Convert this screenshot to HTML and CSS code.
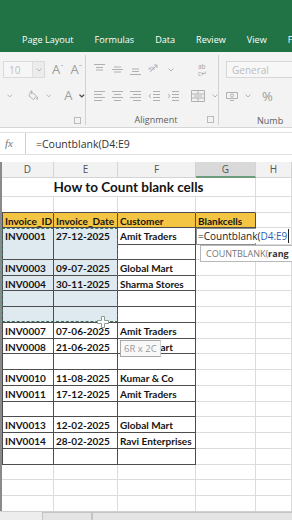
FILE: index.html
```html
<!DOCTYPE html>
<html>
<head>
	<meta charset="utf-8">
	<title>How to Count blank cells</title>
	<link rel="stylesheet" href="styles.css">
</head>
<body>
	<div class="tabbar">
		<span>Page Layout</span>
		<span>Formulas</span>
		<span>Data</span>
		<span>Review</span>
		<span>View</span>
		<span>F</span>
	</div>

	<div class="ribbon">
		<!-- font group (cut off on the left) -->
		<div class="grp grp-font">
			<div class="rrow">
				<div class="sizebox"><span>10</span><span class="sizedd"><svg class="chev" viewBox="0 0 6 4"><path d="M0.5 0.5 L3 3 L5.5 0.5"/></svg></span></div>
				<span class="bigA">A<small>&#710;</small></span>
				<span class="bigA">A<small>&#711;</small></span>
			</div>
			<div class="rrow">
				<svg class="chev first" viewBox="0 0 6 4"><path d="M0.5 0.5 L3 3 L5.5 0.5"/></svg>
				<svg class="ico" width="12" height="13" viewBox="0 0 12 13"><path d="M3 2 L9 7 L6 11 L1 7 Z M4 1 L4 5"/><path d="M10 8 Q11 10 10 11 Q9 10 10 8 Z"/></svg>
				<svg class="chev" viewBox="0 0 6 4"><path d="M0.5 0.5 L3 3 L5.5 0.5"/></svg>
				<span class="bigA plain">A</span>
				<svg class="chev dark" viewBox="0 0 6 4"><path d="M0.5 0.5 L3 3 L5.5 0.5"/></svg>
			</div>
			<div class="rrow foot">
				<span class="launch"></span>
			</div>
		</div>

		<!-- alignment group -->
		<div class="grp grp-align">
			<div class="rrow">
				<svg class="ico" width="11" height="13" viewBox="0 0 11 13"><path d="M0 1.5 H11 M2 4.5 H9 M2 7 H9"/></svg>
				<svg class="ico" width="11" height="13" viewBox="0 0 11 13"><path d="M0 6.5 H11 M2 4 H9 M2 9 H9"/></svg>
				<svg class="ico" width="11" height="13" viewBox="0 0 11 13"><path d="M0 11.5 H11 M2 6 H9 M2 8.5 H9"/></svg>
				<svg class="ico" width="13" height="13" viewBox="0 0 13 13"><path d="M2 9 L9 2 M9 2 L6 2 M9 2 L9 5"/><text x="0" y="7" font-size="6">ab</text></svg>
				<svg class="chev" viewBox="0 0 6 4"><path d="M0.5 0.5 L3 3 L5.5 0.5"/></svg>
				<span class="wrap">ab<br>c&#8629;</span>
			</div>
			<div class="rrow">
				<svg class="ico" width="11" height="12" viewBox="0 0 11 12"><path d="M0 1.5 H11 M0 4.5 H8 M0 7.5 H11 M0 10.5 H8"/></svg>
				<svg class="ico" width="11" height="12" viewBox="0 0 11 12"><path d="M0 1.5 H11 M2 4.5 H9 M0 7.5 H11 M2 10.5 H9"/></svg>
				<svg class="ico" width="11" height="12" viewBox="0 0 11 12"><path d="M0 1.5 H11 M3 4.5 H11 M0 7.5 H11 M3 10.5 H11"/></svg>
				<svg class="ico" width="12" height="12" viewBox="0 0 12 12"><path d="M5 1.5 H12 M5 4.5 H12 M5 7.5 H12 M5 10.5 H12 M3 4 L1 6 L3 8"/></svg>
				<svg class="ico" width="12" height="12" viewBox="0 0 12 12"><path d="M5 1.5 H12 M5 4.5 H12 M5 7.5 H12 M5 10.5 H12 M1 4 L3 6 L1 8"/></svg>
				<svg class="ico merge" width="14" height="12" viewBox="0 0 14 12"><path d="M0.5 0.5 H13.5 V11.5 H0.5 Z M0.5 4 H13.5 M0.5 8 H13.5 M7 0.5 V4 M7 8 V11.5 M3 6 H11"/></svg>
				<svg class="chev" viewBox="0 0 6 4"><path d="M0.5 0.5 L3 3 L5.5 0.5"/></svg>
			</div>
			<div class="rrow foot">
				<span class="grpname">Alignment</span>
				<span class="launch"></span>
			</div>
		</div>

		<!-- number group (cut off on the right) -->
		<div class="grp grp-num">
			<div class="rrow">
				<div class="fmtbox">General</div>
			</div>
			<div class="rrow">
				<svg class="ico" width="12" height="11" viewBox="0 0 12 11"><path d="M0.5 1.5 H11.5 V7.5 H0.5 Z"/><circle cx="6" cy="4.5" r="1.6"/><path d="M4 9.5 H8"/></svg>
				<svg class="chev" viewBox="0 0 6 4"><path d="M0.5 0.5 L3 3 L5.5 0.5"/></svg>
				<span class="pct">%</span>
			</div>
			<div class="rrow foot">
				<span class="grpname">Numb</span>
			</div>
		</div>
	</div>

	<div class="formulabar">
		<span class="fx">fx</span>
		<span class="ftext">=Countblank(D4:E9</span>
	</div>

	<div class="sheet">
		<div class="row colhead">
			<div class="rh"></div><div>D</div><div>E</div><div>F</div><div class="on">G</div><div>H</div>
		</div>
		<div class="row r-title">
			<div class="rh"></div><div class="title">How to Count blank cells</div><div></div>
		</div>
		<div class="row">
			<div class="rh"></div><div class="tb-top"></div><div class="tb-top"></div><div class="tb-top"></div><div class="tb-top"></div><div></div>
		</div>
		<div class="row">
			<div class="rh"></div><div class="b bl hd">Invoice_ID</div><div class="b hd">Invoice_Date</div><div class="b hd">Customer</div><div class="b hd">Blankcells</div><div></div>
		</div>

		<div class="row"><div class="rh"></div><div class="b bl sel">INV0001</div><div class="b sel">27-12-2025</div><div class="b">Amit Traders</div><div class="edit"><span class="etext">=Countblank(<em>D4:E9</em></span></div><div class="white"></div></div>
		<div class="row"><div class="rh"></div><div class="b bl sel"></div><div class="b sel"></div><div class="b"></div><div></div><div></div></div>
		<div class="row"><div class="rh"></div><div class="b bl sel">INV0003</div><div class="b sel">09-07-2025</div><div class="b">Global Mart</div><div></div><div></div></div>
		<div class="row"><div class="rh"></div><div class="b bl sel">INV0004</div><div class="b sel">30-11-2025</div><div class="b">Sharma Stores</div><div></div><div></div></div>
		<div class="row"><div class="rh"></div><div class="b bl sel"></div><div class="b sel"></div><div class="b"></div><div></div><div></div></div>
		<div class="row"><div class="rh"></div><div class="b bl sel"></div><div class="b sel"></div><div class="b"></div><div></div><div></div></div>
		<div class="row"><div class="rh"></div><div class="b bl">INV0007</div><div class="b">07-06-2025</div><div class="b">Amit Traders</div><div></div><div></div></div>
		<div class="row"><div class="rh"></div><div class="b bl">INV0008</div><div class="b">21-06-2025</div><div class="b">Global Mart</div><div></div><div></div></div>
		<div class="row"><div class="rh"></div><div class="b bl"></div><div class="b"></div><div class="b"></div><div></div><div></div></div>
		<div class="row"><div class="rh"></div><div class="b bl">INV0010</div><div class="b">11-08-2025</div><div class="b">Kumar &amp; Co</div><div></div><div></div></div>
		<div class="row"><div class="rh"></div><div class="b bl">INV0011</div><div class="b">17-12-2025</div><div class="b">Amit Traders</div><div></div><div></div></div>
		<div class="row"><div class="rh"></div><div class="b bl"></div><div class="b"></div><div class="b"></div><div></div><div></div></div>
		<div class="row"><div class="rh"></div><div class="b bl">INV0013</div><div class="b">12-02-2025</div><div class="b">Global Mart</div><div></div><div></div></div>
		<div class="row"><div class="rh"></div><div class="b bl">INV0014</div><div class="b">28-02-2025</div><div class="b">Ravi Enterprises</div><div></div><div></div></div>
		<div class="row"><div class="rh"></div><div class="b bl"></div><div class="b"></div><div class="b"></div><div></div><div></div></div>
		<div class="row"><div class="rh"></div><div></div><div></div><div></div><div></div><div></div></div>
		<div class="row"><div class="rh"></div><div></div><div></div><div></div><div></div><div></div></div>
		<div class="row"><div class="rh"></div><div></div><div></div><div></div><div></div><div></div></div>

		<!-- things lying over the grid -->
		<div class="marquee"></div>
		<svg class="plus" width="12" height="12" viewBox="0 0 12 12"><path d="M4.5 0.5 H7.5 V4.5 H11.5 V7.5 H7.5 V11.5 H4.5 V7.5 H0.5 V4.5 H4.5 Z"/></svg>
		<div class="tip-size">6R x 2C</div>
		<div class="tip-fn">COUNTBLANK(<b>rang</b></div>
	</div>

	<div class="sheettabs">
		<span class="stab"></span>
		<span class="stab wide"><i></i></span>
	</div>
</body>
</html>
```

FILE: styles.css
```css
body{
	margin: 0;
	width: 292px;
	height: 520px;
	overflow: hidden;
	background: #fff;
	font-family: "Lato", "Open Sans", sans-serif;
}

/* green tab strip */
.tabbar{
	height: 52px;
	box-sizing: border-box;
	background: #217346;
	color: #fff;
	display: flex;
	align-items: flex-end;
	gap: 21px;
	padding: 0 0 6px 22px;
	font-family: "Open Sans", sans-serif;
	font-size: 9.1px;
	white-space: nowrap;
	overflow: hidden;
}

/* ribbon, greyed out while editing */
.ribbon{
	height: 76px;
	box-sizing: border-box;
	background: #f3f3f3;
	border-bottom: 1px solid #d6d6d6;
	display: flex;
	color: #a9a9a9;
}
.grp{
	display: flex;
	flex-direction: column;
	padding-top: 6px;
	box-sizing: border-box;
	border-right: 1px solid #d2d2d2;
	margin: 3px 0 2px;
	padding-bottom: 0;
}
.grp-font{
	width: 86px;
	padding-left: 3px;
}
.grp-align{
	width: 146px;
	padding-left: 8px;
}
.grp-num{
	flex: 1;
	border-right: none;
	padding-left: 7px;
}
.rrow{
	height: 18px;
	display: flex;
	align-items: center;
	gap: 7px;
	margin-bottom: 9px;
}
.rrow.foot{
	height: 12px;
	margin: 0;
	position: relative;
	justify-content: center;
}
.ico{
	fill: none;
	stroke: #b0b0b0;
	stroke-width: 1;
}
.ico text{
	fill: #b0b0b0;
	stroke: none;
	font-family: "Open Sans", sans-serif;
}
.chev{
	width: 6px;
	height: 4px;
	fill: none;
	stroke: #b3b3b3;
	stroke-width: 1;
}
.chev.first{
	margin-left: 4px;
	margin-right: 8px;
}
.chev.dark{
	stroke: #444;
	stroke-width: 1.4;
}
.sizebox{
	width: 42px;
	height: 17px;
	box-sizing: border-box;
	border: 1px solid #dadada;
	background: #f6f6f6;
	display: flex;
	align-items: center;
	justify-content: space-between;
	font-size: 10px;
	font-family: "Open Sans", sans-serif;
	padding-left: 5px;
	color: #bdbdbd;
}
.sizedd{
	width: 11px;
	height: 15px;
	border-left: 1px solid #dedede;
	display: flex;
	align-items: center;
	justify-content: center;
	background: #ececec;
}
.bigA{
	font-family: "Open Sans", sans-serif;
	font-size: 13px;
	color: #9d9d9d;
	line-height: 1;
}
.bigA small{
	font-size: 8px;
	vertical-align: top;
}
.bigA.plain{
	margin-left: 6px;
}
.wrap{
	font-family: "Open Sans", sans-serif;
	font-size: 6.5px;
	line-height: 7px;
	margin-left: 17px;
	color: #a0a0a0;
}
.merge{
	margin-left: 5px;
}
.fmtbox{
	width: 80px;
	height: 17px;
	box-sizing: border-box;
	border: 1px solid #d8d8d8;
	background: #f7f7f7;
	font-size: 10px;
	font-family: "Open Sans", sans-serif;
	padding: 1px 0 0 5px;
	color: #bcbcbc;
}
.pct{
	font-family: "Open Sans", sans-serif;
	font-size: 13px;
	margin-left: 4px;
	color: #9a9a9a;
}
.grpname{
	font-family: "Open Sans", sans-serif;
	font-size: 9px;
	color: #5e5e5e;
}
.grp-num .rrow.foot{
	justify-content: flex-start;
	padding-left: 31px;
}
.launch{
	position: absolute;
	right: 4px;
	top: 3px;
	width: 5px;
	height: 5px;
	border: 1px solid #bbb;
}

/* formula bar */
.formulabar{
	margin-top: 4px;
	height: 21px;
	background: #fff;
	border-top: 1px solid #e0e0e0;
	border-bottom: 1px solid #e0e0e0;
	display: flex;
	align-items: center;
	font-size: 10.5px;
	color: #333;
}
.fx{
	width: 26px;
	height: 21px;
	line-height: 20px;
	border-right: 1px solid #cfcfcf;
	padding-left: 5px;
	box-sizing: border-box;
	font-family: "Liberation Serif", serif;
	font-style: italic;
	color: #777;
	font-size: 11px;
}
.ftext{
	padding-left: 10px;
	font-family: "Open Sans", sans-serif;
}

/* worksheet */
.sheet{
	margin-top: 7px;
	height: 349px;
	overflow: hidden;
	position: relative;
}
.row{
	display: grid;
	grid-template-columns: 2px 52px 64px 78px 60px 36px;
	height: 15.75px;
	font-size: 10px;
	font-weight: bold;
	color: #141414;
}
.row > div{
	box-sizing: border-box;
	border-right: 1px solid #dcdcdc;
	border-bottom: 1px solid #dcdcdc;
	padding: 1px 0 0 2px;
	line-height: 15px;
	white-space: nowrap;
	overflow: hidden;
}
.row > .rh{
	background: #8a8a8a;
	border: none;
	padding: 0;
}
.colhead{
	height: 16px;
	background: #f2f2f2;
	font-weight: normal;
	font-family: "Open Sans", sans-serif;
	color: #555;
}
.colhead > div{
	text-align: center;
	padding: 0;
	border-color: #d4d4d4;
}
.colhead > .on{
	background: #d9d9d9;
	border-bottom: 2px solid #6d9c7c;
}
.r-title{
	height: 18.75px;
	grid-template-columns: 2px 254px 36px;
	font-size: 13.5px;
}
.r-title > .title{
	text-align: center;
	line-height: 19px;
	padding: 0;
}
.row > .tb-top{
	border-bottom-color: #4d4d4d;
}
.row > .b{
	border-right-color: #4d4d4d;
	border-bottom-color: #4d4d4d;
}
.row > .bl{
	border-left: 1px solid #4d4d4d;
}
.row > .hd{
	background: #f4c542;
}
.row > .sel{
	background: #dfe9f0;
}
.row > .edit{
	overflow: visible;
	position: relative;
	background: #fff;
	border: 1px solid #8f8f8f;
	z-index: 1;
	padding: 0 0 0 1px;
}
.row > .white{
	background: #fff;
}
.etext{
	font-weight: normal;
	font-family: "Open Sans", sans-serif;
	font-size: 10px;
	color: #222;
	background: #fff;
	padding-right: 1px;
	border-right: 1px solid #222;
}
.etext em{
	font-style: normal;
	color: #2d5fb3;
}

.marquee{
	position: absolute;
	left: 2px;
	top: 66px;
	width: 116px;
	height: 94px;
	box-sizing: border-box;
	border: 1.5px dashed #3d6f63;
}
.plus{
	position: absolute;
	left: 97px;
	top: 154px;
	fill: #fff;
	stroke: #8a9a94;
	stroke-width: 1;
}
.tip-size{
	position: absolute;
	left: 120px;
	top: 178px;
	padding: 0 3px;
	height: 17px;
	line-height: 16px;
	box-sizing: border-box;
	border: 1px solid #a8a8a8;
	border-right-color: #d0d0d0;
	background: #f8f8f8;
	font-family: "Open Sans", sans-serif;
	font-size: 9.5px;
	color: #9a9a9a;
}
.tip-fn{
	position: absolute;
	left: 200px;
	top: 83px;
	width: 92px;
	height: 17px;
	line-height: 16px;
	box-sizing: border-box;
	padding-left: 5px;
	border: 1px solid #b8b8b8;
	border-right: none;
	background: #fff;
	font-family: "Open Sans", sans-serif;
	font-size: 9px;
	color: #777;
	white-space: nowrap;
	z-index: 2;
}
.tip-fn b{
	color: #333;
}

/* sheet tab strip at the bottom */
.sheettabs{
	height: 9px;
	background: #ededed;
	border-top: 1px solid #cfcfcf;
	display: flex;
	padding-left: 42px;
}
.stab{
	width: 48px;
	border: 1px solid #c4c4c4;
	border-bottom: none;
	background: #e4e4e4;
}
.stab.wide{
	flex: 1;
	border-right: none;
}
```
